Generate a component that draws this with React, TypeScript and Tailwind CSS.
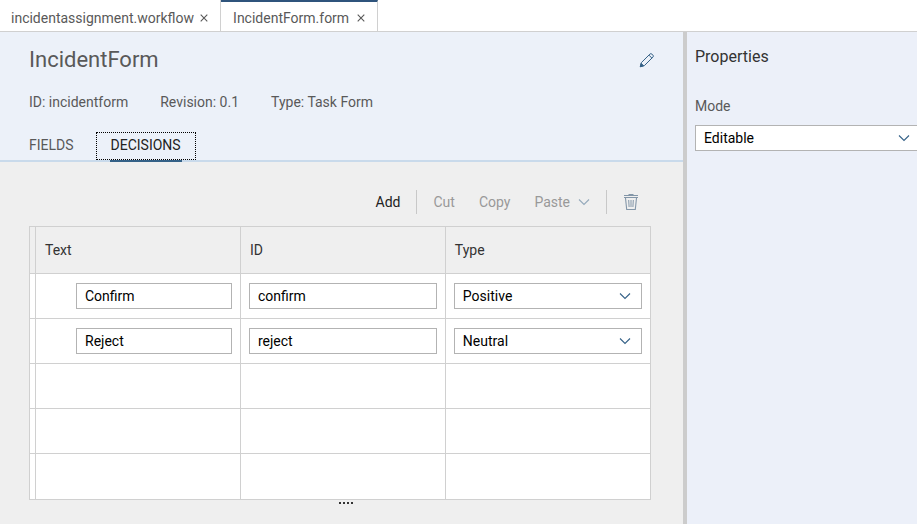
import React from "react";

type Decision = { text: string; id: string; type: string };

const decisions: Decision[] = [
  { text: "Confirm", id: "confirm", type: "Positive" },
  { text: "Reject", id: "reject", type: "Neutral" },
];

function Chevron({ className = "" }: { className?: string }) {
  return (
    <svg viewBox="0 0 12 8" className={`h-2 w-3 ${className}`} fill="none" stroke="currentColor" strokeWidth="1.1" aria-hidden="true">
      <path d="M1 1.5 L6 6.5 L11 1.5" />
    </svg>
  );
}

function CloseIcon() {
  return (
    <svg viewBox="0 0 8 8" className="h-2 w-2" fill="none" stroke="currentColor" strokeWidth="1.1" aria-hidden="true">
      <path d="M0.7 0.7 L7.3 7.3 M7.3 0.7 L0.7 7.3" />
    </svg>
  );
}

function PencilIcon() {
  return (
    <svg viewBox="0 0 16 16" className="h-4 w-4" fill="none" stroke="currentColor" strokeWidth="1" strokeLinejoin="round" aria-hidden="true">
      <path d="M1.3 14.7 L2.4 10.6 L10.9 2.1 Q11.9 1.1 12.9 2.1 L13.9 3.1 Q14.9 4.1 13.9 5.1 L5.4 13.6 Z" />
      <path d="M9.9 3.1 L12.9 6.1" />
      <path d="M1.3 14.7 L2.2 11.4 L4.6 13.8 Z" fill="currentColor" />
    </svg>
  );
}

function TrashIcon() {
  return (
    <svg viewBox="0 0 16 18" className="h-[18px] w-4" fill="none" stroke="currentColor" aria-hidden="true">
      <path d="M1 4.5 H15" strokeWidth="1" />
      <path d="M1 2.5 H15" strokeWidth="1" />
      <path d="M5.5 1.5 H10.5" strokeWidth="1" />
      <path d="M2.5 5 L3.7 16.5 H12.3 L13.5 5" strokeWidth="1.1" />
      <path d="M5.7 7 L6.1 14 M8 7 V14 M10.3 7 L9.9 14" strokeWidth="1" />
    </svg>
  );
}

function Dropdown({ id, label, value, options }: { id: string; label?: string; value: string; options: string[] }) {
  return (
    <div className="grid items-center">
      <select
        id={id}
        aria-label={label}
        defaultValue={value}
        className="col-start-1 row-start-1 h-[26px] w-full appearance-none rounded-none border border-[#b3b3b3] bg-white px-2 text-black"
      >
        {options.map((o) => (
          <option key={o}>{o}</option>
        ))}
      </select>
      <Chevron className="pointer-events-none col-start-1 row-start-1 mr-[11px] justify-self-end text-[#346187]" />
    </div>
  );
}

const inputClass = "block h-[26px] w-full rounded-none border border-[#b3b3b3] bg-white px-2 text-black";
const cell = "border-r border-b border-[#d0d0d0] p-0";

export default function App() {
  return (
    <div className="flex min-h-screen flex-col overflow-hidden bg-[#efefef] font-['Roboto','Liberation_Sans',sans-serif] text-sm text-[#595959]">
      <nav aria-label="Open files" className="flex h-8 border-b border-[#d0d0d0] bg-white">
        <div className="flex items-center gap-1.5 border-r border-[#d0d0d0] pt-1 pr-3 pl-[11px]">
          <button type="button">incidentassignment.workflow</button>
          <button type="button" aria-label="Close incidentassignment.workflow"><CloseIcon /></button>
        </div>
        <div className="flex items-center gap-2 border-t-2 border-r border-t-[#2f547c] border-r-[#d0d0d0] pt-0.5 pr-3 pl-3">
          <button type="button">IncidentForm.form</button>
          <button type="button" aria-label="Close IncidentForm.form"><CloseIcon /></button>
        </div>
      </nav>

      <div className="flex flex-1">
        <main className="min-w-0 flex-1">
          <header className="border-b-2 border-[#c9daeb] bg-[#ecf1f9] pt-3 pr-7 pl-[29px]">
            <div className="flex h-8 items-center justify-between">
              <h1 className="text-[22px] leading-8">IncidentForm</h1>
              <button type="button" aria-label="Edit" className="text-[#346187]"><PencilIcon /></button>
            </div>
            <div className="mt-4 flex gap-8 leading-5">
              <span>ID: incidentform</span>
              <span>Revision: 0.1</span>
              <span>Type: Task Form</span>
            </div>
            <div className="mt-5 flex h-7 items-stretch" role="tablist">
              <button type="button" role="tab" aria-selected="false" className="mr-[22px] pb-0.5">FIELDS</button>
              <button type="button" role="tab" aria-selected="true" className="relative border border-dotted border-black px-3.5 pb-0.5 text-[#222222]">
                DECISIONS
                <span className="absolute inset-x-[13px] -bottom-[3px] h-0.5 bg-[#346187]" />
              </button>
            </div>
          </header>

          <section className="pt-7 pr-8 pl-[29px]">
            <div className="flex h-6 items-center justify-end text-[#999999]">
              <button type="button" className="mr-4 text-[#222222]">Add</button>
              <span className="mr-4 h-6 w-px bg-[#c8c8c8]" />
              <button type="button" className="mr-6">Cut</button>
              <button type="button" className="mr-6">Copy</button>
              <button type="button" className="mr-4 flex items-center gap-2">
                Paste
                <Chevron className="text-[#94a9bb]" />
              </button>
              <span className="mr-4 h-6 w-px bg-[#c8c8c8]" />
              <button type="button" aria-label="Delete" className="mr-3 text-[#8396a8]"><TrashIcon /></button>
            </div>

            <table className="mt-3 w-full table-fixed border-separate border-spacing-0 border-t border-l border-[#d0d0d0] bg-white">
              <colgroup>
                <col className="w-1.5" />
                <col className="w-[33%]" />
                <col className="w-[33%]" />
                <col />
              </colgroup>
              <thead className="bg-[#efefef] text-left text-[#333333]">
                <tr className="h-[47px]">
                  <td className={cell} />
                  <th scope="col" className={`${cell} font-normal`}><span className="px-[9px]">Text</span></th>
                  <th scope="col" className={`${cell} font-normal`}><span className="px-[9px]">ID</span></th>
                  <th scope="col" className={`${cell} font-normal`}><span className="px-[9px]">Type</span></th>
                </tr>
              </thead>
              <tbody>
                {decisions.map((d) => (
                  <tr key={d.id} className="h-[45px]">
                    <td className={cell} />
                    <td className={cell}>
                      <div className="pr-2 pl-10"><input aria-label="Text" defaultValue={d.text} className={inputClass} /></div>
                    </td>
                    <td className={cell}>
                      <div className="px-2"><input aria-label="ID" defaultValue={d.id} className={inputClass} /></div>
                    </td>
                    <td className={cell}>
                      <div className="px-2"><Dropdown id={`type-${d.id}`} label="Type" value={d.type} options={["Positive", "Neutral", "Negative"]} /></div>
                    </td>
                  </tr>
                ))}
                {[0, 1, 2].map((n) => (
                  <tr key={n} className="h-[45px] last:h-[46px]">
                    <td className={cell} />
                    <td className={cell} />
                    <td className={cell} />
                    <td className={cell} />
                  </tr>
                ))}
              </tbody>
            </table>
            <div className="flex justify-center gap-0.5 pt-0.5 pl-3" aria-hidden="true">
              {[0, 1, 2, 3].map((n) => (
                <span key={n} className="h-0.5 w-0.5 bg-[#333333]" />
              ))}
            </div>
          </section>
        </main>

        <div className="w-1 bg-[#cccccc]" />

        <aside className="w-[230px] shrink-0 bg-[#ecf0f9] pt-[13px] pl-2">
          <h2 className="text-base leading-6 text-[#333333]">Properties</h2>
          <label htmlFor="mode" className="mt-[25px] mb-[7px] block leading-6">Mode</label>
          <div className="-mr-1">
            <Dropdown id="mode" value="Editable" options={["Editable", "Read Only"]} />
          </div>
        </aside>
      </div>
    </div>
  );
}
